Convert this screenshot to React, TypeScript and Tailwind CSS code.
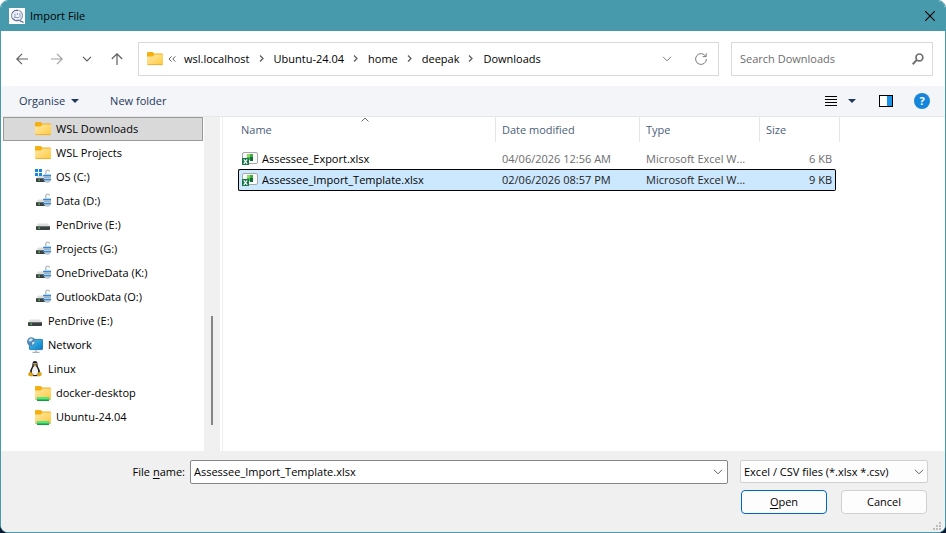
import type { ReactNode } from "react";

const FolderIcon = ({ shared = false }: { shared?: boolean }) => (
  <svg viewBox="0 0 16 16" className="h-4 w-4 shrink-0" aria-hidden="true">
    <defs>
      <linearGradient id="folder" x1="0" y1="0" x2="1" y2="1">
        <stop offset="0" stopColor="#ffe9ac" />
        <stop offset="1" stopColor="#ffc93c" />
      </linearGradient>
    </defs>
    <path d="M0 2.2Q0 1 1.2 1H5.6L7.2 2.6H14.8Q16 2.6 16 3.8V8H0Z" fill="#f5b010" />
    <path d="M0 5.6H5.6L7.6 3.6H15Q16 3.6 16 4.6V13Q16 14 15 14H1Q0 14 0 13Z" fill="url(#folder)" />
    <path d="M0.6 13.6H15.4" stroke="#e3a21a" strokeWidth="0.7" />
    {shared && (
      <>
        <path d="M0 14.5H16" stroke="#c4c8cc" />
        <rect x="2" y="12" width="12" height="4" rx="0.6" fill="#169c3c" />
        <rect x="2" y="12" width="12" height="2.4" rx="0.6" fill="#55e87c" />
      </>
    )}
  </svg>
);

const DriveIcon = ({ locked = false, system = false }: { locked?: boolean; system?: boolean }) => (
  <svg viewBox="0 0 16 16" className="h-4 w-4 shrink-0" aria-hidden="true">
    <path d="M3.2 6.5H12.8L15 9.5H1Z" fill="#dcdee0" />
    <rect x="1" y="9" width={locked ? 10 : 14} height="4" rx="0.7" fill="#3b3f42" />
    <rect x="1" y="9" width={locked ? 10 : 14} height="1" fill="#6a6e71" />
    <rect x="3.5" y="10.5" width="1.4" height="1.4" fill="#3fe04c" />
    {locked && (
      <>
        <path d="M10.8 5V3.2Q11 1.1 12.8 1.1Q14.4 1.1 14.4 2.6" fill="none" stroke="#b3bac0" strokeWidth="1.4" />
        <path d="M9 5H16V11Q15.2 14 12.5 14Q9.8 14 9 11Z" fill="#c3cbd3" />
        <path d="M8 6H16V7.2H8ZM8 10H16V11.2H8Z" fill="#2590ec" />
        <path d="M9 8H16V9H9Z" fill="#a5afb8" />
      </>
    )}
    {system && (
      <path d="M0 0H3V3H0ZM4 0H7V3H4ZM0 4H3V7H0ZM4 4H7V7H4Z" fill="#1388dc" />
    )}
  </svg>
);

const NetworkIcon = () => (
  <svg viewBox="0 0 16 16" className="h-4 w-4 shrink-0" aria-hidden="true">
    <defs>
      <linearGradient id="screen" x1="0" y1="0" x2="1" y2="1">
        <stop offset="0" stopColor="#3ccbf0" />
        <stop offset="1" stopColor="#0f78c4" />
      </linearGradient>
    </defs>
    <path d="M9 13V15M5.5 15.3H12.5" stroke="#a6b0b8" strokeWidth="1.2" />
    <rect x="2.4" y="2.4" width="13.2" height="10.2" rx="0.8" fill="url(#screen)" stroke="#1469a8" strokeWidth="0.8" />
    <circle cx="4.3" cy="4.6" r="4.3" fill="#4f88b4" />
    <path d="M1.4 2.8L4 1.2L6 2L4.8 4L2.6 4.8ZM5.2 5L7.6 4.4L7.4 6.6L5 8Z" fill="#c9e2f0" />
  </svg>
);

const LinuxIcon = () => (
  <svg viewBox="0 0 16 16" className="h-4 w-4 shrink-0" aria-hidden="true">
    <path d="M8 0Q5.3 0 5.4 3.4Q5.5 5.3 4 7.5Q2.4 10 3 12.5Q5 15.3 8 15.3Q11 15.3 13 12.5Q13.6 10 12 7.5Q10.5 5.3 10.6 3.4Q10.7 0 8 0Z" fill="#222" />
    <path d="M8 4.8Q6.4 5 5.4 8Q4 11.8 6 13.6Q8 14.6 10 13.6Q12 11.8 10.6 8Q9.6 5 8 4.8Z" fill="#f2f2f2" />
    <circle cx="7" cy="2.8" r="0.7" fill="#fff" />
    <circle cx="9" cy="2.8" r="0.7" fill="#fff" />
    <path d="M6.4 4.2L8 3.4L9.7 4.2L8 5.4Z" fill="#e8a512" />
    <path d="M1.4 12L3.4 10.6L6.4 13.6Q6.6 15.6 4.8 15.6L1.4 14.8ZM14.6 12L12.6 10.6L9.8 13.4Q9.6 15.6 11.4 15.6L14.6 14.4Z" fill="#d9a21b" />
  </svg>
);

const ExcelIcon = () => (
  <svg viewBox="0 0 16 16" className="h-4 w-4 shrink-0" aria-hidden="true">
    <rect x="0.5" y="1.5" width="15" height="11" rx="1.5" fill="#fafafa" stroke="#a8a8a8" />
    <path d="M5 3H8V6H5Z" fill="#8fd96a" />
    <path d="M8 3H11V6H8Z" fill="#3fae3c" />
    <path d="M5 6H8V9H5Z" fill="#4cbf43" />
    <path d="M8 6H11V10H8Z" fill="#146b3c" />
    <rect x="0" y="7" width="7" height="7" fill="#17754a" />
    <path d="M1.8 8.3L5.2 12.8M5.2 8.3L1.8 12.8" stroke="#fff" strokeWidth="1.2" />
  </svg>
);

const ChevronDown = ({ className }: { className: string }) => (
  <svg viewBox="0 0 10 6" className={className} fill="none" stroke="currentColor" aria-hidden="true">
    <path d="M1 0.8L5 4.8L9 0.8" />
  </svg>
);

const CaretDown = () => (
  <svg viewBox="0 0 8 4" className="h-1 w-2" fill="#1e395b" aria-hidden="true">
    <path d="M0 0H8L4 4Z" />
  </svg>
);

type TreeItem = { label: string; icon: ReactNode; nested?: boolean; selected?: boolean };

const tree: TreeItem[] = [
  { label: "WSL Downloads", icon: <FolderIcon />, nested: true, selected: true },
  { label: "WSL Projects", icon: <FolderIcon />, nested: true },
  { label: "OS (C:)", icon: <DriveIcon locked system />, nested: true },
  { label: "Data (D:)", icon: <DriveIcon locked />, nested: true },
  { label: "PenDrive (E:)", icon: <DriveIcon />, nested: true },
  { label: "Projects (G:)", icon: <DriveIcon locked />, nested: true },
  { label: "OneDriveData (K:)", icon: <DriveIcon locked />, nested: true },
  { label: "OutlookData (O:)", icon: <DriveIcon locked />, nested: true },
  { label: "PenDrive (E:)", icon: <DriveIcon /> },
  { label: "Network", icon: <NetworkIcon /> },
  { label: "Linux", icon: <LinuxIcon /> },
  { label: "docker-desktop", icon: <FolderIcon shared />, nested: true },
  { label: "Ubuntu-24.04", icon: <FolderIcon shared />, nested: true },
];

const files = [
  { name: "Assessee_Export.xlsx", modified: "04/06/2026 12:56 AM", size: "6 KB", selected: false },
  { name: "Assessee_Import_Template.xlsx", modified: "02/06/2026 08:57 PM", size: "9 KB", selected: true },
];

const crumbs = ["wsl.localhost", "Ubuntu-24.04", "home", "deepak", "Downloads"];

const TitleBar = () => (
  <header className="flex h-[30px] items-center bg-[#469aac] pr-2.5 pl-2">
    <svg viewBox="0 0 16 16" className="h-4 w-4" aria-hidden="true">
      <rect width="16" height="16" fill="#fff" />
      <circle cx="8" cy="7.5" r="5.5" fill="#eef1f8" stroke="#8c98b8" strokeWidth="1.2" />
      <path d="M3 5Q5 1.6 9 2.4M3.4 10.4Q6 13.4 10 12.2" fill="none" stroke="#5a6a98" />
      <path d="M6 5.5V9M8.4 5V7M11 5V9.5M5 9.5H10" stroke="#8494b8" strokeWidth="0.9" />
      <path d="M10.5 12.5L14.5 14.5" stroke="#44568c" strokeWidth="1.2" />
    </svg>
    <h1 className="ml-[5px] flex-1">Import File</h1>
    <button aria-label="Close">
      <svg viewBox="0 0 10 10" className="h-2.5 w-2.5" stroke="#000" strokeWidth="1.1" aria-hidden="true">
        <path d="M0 0L10 10M10 0L0 10" />
      </svg>
    </button>
  </header>
);

const NavBar = () => (
  <div className="flex h-[55px] items-center bg-white pr-3 pl-1.5 text-[#5f5f5f]">
    <button aria-label="Back" className="mr-[5px] flex h-8 w-[30px] items-center justify-center">
      <svg viewBox="0 0 12 12" className="h-3 w-3" fill="none" stroke="currentColor" strokeWidth="1.2">
        <path d="M12 6H0.8M6 0.8L0.8 6L6 11.2" />
      </svg>
    </button>
    <button aria-label="Forward" className="flex h-8 w-[30px] items-center justify-center text-[#a0a0a0]">
      <svg viewBox="0 0 12 12" className="h-3 w-3" fill="none" stroke="currentColor" strokeWidth="1.2">
        <path d="M0 6H11.2M6 0.8L11.2 6L6 11.2" />
      </svg>
    </button>
    <button aria-label="Recent locations" className="flex h-8 w-[30px] items-center justify-center">
      <ChevronDown className="h-1.5 w-2.5 stroke-[1.2]" />
    </button>
    <button aria-label="Up" className="mr-1.5 flex h-8 w-[30px] items-center justify-center">
      <svg viewBox="0 0 12 12" className="h-3 w-3" fill="none" stroke="currentColor" strokeWidth="1.2">
        <path d="M6 12V0.8M0.8 6L6 0.8L11.2 6" />
      </svg>
    </button>

    <div className="flex h-[34px] min-w-0 flex-1 items-center border border-[#d9d9d9] pr-[11px] pl-2">
      <FolderIcon />
      <svg viewBox="0 0 8 6" className="mr-2 ml-[5px] h-1.5 w-2" fill="none" stroke="currentColor" aria-hidden="true">
        <path d="M3.5 0.4L1 3L3.5 5.6M7.3 0.4L4.8 3L7.3 5.6" />
      </svg>
      <nav aria-label="Path" className="flex flex-1 items-center text-black">
        {crumbs.map((crumb, i) => (
          <span key={crumb} className="flex items-center">
            {i > 0 && (
              <svg viewBox="0 0 5 7" className="mr-2.5 ml-[9px] h-[7px] w-[5px]" fill="none" stroke="#5f5f5f" strokeWidth="1.3" aria-hidden="true">
                <path d="M1 0.5L4 3.5L1 6.5" />
              </svg>
            )}
            <button>{crumb}</button>
          </span>
        ))}
      </nav>
      <button aria-label="Previous locations" className="mr-[23px] text-[#7a7a7a]">
        <ChevronDown className="h-1.5 w-2.5" />
      </button>
      <button aria-label="Refresh" className="text-[#7a7a7a]">
        <svg viewBox="0 0 12 12" className="h-3 w-3" fill="none" stroke="currentColor">
          <path d="M10.6 3.2A5.4 5.4 0 1 0 11.4 6M11.2 0.3V3.6H7.8" />
        </svg>
      </button>
    </div>

    <div className="ml-3 flex h-[34px] w-[202px] items-center border border-[#d9d9d9] pr-2 pl-2">
      <input
        type="search"
        aria-label="Search Downloads"
        placeholder="Search Downloads"
        className="min-w-0 flex-1 outline-none placeholder:text-[#6d6d6d]"
      />
      <svg viewBox="0 0 12 12" className="h-3 w-3" fill="none" stroke="#707070" aria-hidden="true">
        <circle cx="7.4" cy="4.4" r="3.4" strokeWidth="1.7" />
        <path d="M4.8 7L0.6 11.2" strokeWidth="2" />
      </svg>
    </div>
  </div>
);

const Toolbar = () => (
  <div className="flex h-[31px] items-center border-b border-[#e5e7ea] bg-[#f4f5f8] pr-[15px] pl-[18px] text-[#1e395b]">
    <button className="flex items-center gap-1.5">
      Organise <CaretDown />
    </button>
    <button className="ml-[31px]">New folder</button>
    <div className="ml-auto flex items-center">
      <button aria-label="Change your view">
        <svg viewBox="0 0 12 12" className="h-3 w-3" stroke="#000" aria-hidden="true">
          <path d="M0 1.5H12M0 4.5H12M0 7.5H12M0 10.5H12" />
        </svg>
      </button>
      <button aria-label="More options" className="ml-[11px]">
        <CaretDown />
      </button>
      <button aria-label="Show the preview pane" className="ml-[23px]">
        <svg viewBox="0 0 14 12" className="h-3 w-3.5" aria-hidden="true">
          <rect x="0.5" y="0.5" width="13" height="11" fill="#fff" stroke="#000" />
          <rect x="8" y="1" width="5" height="10" fill="#1b93e6" />
        </svg>
      </button>
      <button
        aria-label="Get help"
        className="ml-[21px] h-4 w-4 rounded-full bg-[#1585dc] text-center leading-4 font-bold text-white"
      >
        ?
      </button>
    </div>
  </div>
);

const Sidebar = () => (
  <nav aria-label="Folders" className="flex w-[219px] shrink-0">
    <ul className="w-[203px] pr-px pl-0.5">
      {tree.map((item, i) => (
        <li key={i}>
          <button
            className={`flex h-6 w-full items-center gap-[5px] border text-left ${
              item.nested ? "pl-[31px]" : "pl-[23px]"
            } ${item.selected ? "border-[#999] bg-[#d9d9d9]" : "border-transparent"}`}
          >
            {item.icon}
            {item.label}
          </button>
        </li>
      ))}
    </ul>
    <div className="flex w-4 flex-col items-center justify-end bg-[#f0f0f0] pb-[26px]">
      <div className="h-[109px] w-0.5 bg-[#858585]" />
    </div>
  </nav>
);

const FileList = () => (
  <div className="ml-0.5 min-w-0 flex-1 border-l border-[#f0f0f0] pl-[15px]">
    <table className="w-[602px] table-fixed border-separate border-spacing-0">
      <colgroup>
        <col className="w-[258px]" />
        <col className="w-36" />
        <col className="w-[120px]" />
        <col className="w-[76px]" />
        <col className="w-1" />
      </colgroup>
      <thead>
        <tr className="h-[25px] text-left text-[#4c607a] [&>th]:border-r [&>th]:border-[#e5e5e5] [&>th]:font-normal">
          <th className="relative pl-[3px]">
            Name
            <svg viewBox="0 0 8 5" className="absolute top-0 left-[123px] h-[5px] w-2" fill="none" stroke="#6a6a6a" aria-hidden="true">
              <path d="M0.5 4.5L4 1L7.5 4.5" />
            </svg>
          </th>
          <th className="pl-1.5">Date modified</th>
          <th className="pl-1.5">Type</th>
          <th className="pl-1.5" colSpan={2}>
            Size
          </th>
        </tr>
      </thead>
      <tbody>
        <tr className="h-1.5">
          <td colSpan={5} />
        </tr>
        {files.map((file) => (
          <tr
            key={file.name}
            aria-selected={file.selected}
            className={
              file.selected
                ? "h-[22px] text-[#222] [&>td]:border-y [&>td]:border-black [&>td]:bg-[#cce8ff]"
                : "h-[21px] text-[#6d6d6d]"
            }
          >
            <td className={file.selected ? "rounded-l-xs border-l pl-[3px] text-black" : "pl-1 text-black"}>
              <span className="flex items-center gap-1">
                <ExcelIcon />
                {file.name}
              </span>
            </td>
            <td className="pl-1.5">{file.modified}</td>
            <td className="pl-1.5">Microsoft Excel W...</td>
            <td className={file.selected ? "rounded-r-xs border-r pr-[3px] text-right" : "pr-1 text-right"}>
              {file.size}
            </td>
          </tr>
        ))}
      </tbody>
    </table>
  </div>
);

const Footer = () => (
  <footer className="relative bg-[#f0f0f0] pt-[9px] pr-[17px] pb-[18px]">
    <div className="flex items-start">
      <label htmlFor="file-name" className="w-[189px] pr-[5px] text-right leading-6">
        File <u className="underline-offset-2">n</u>ame:
      </label>
      <div className="flex h-6 min-w-0 flex-1 items-center rounded-xs border border-[#868686] bg-white pr-1 pl-[3px]">
        <input id="file-name" type="text" defaultValue="Assessee_Import_Template.xlsx" className="min-w-0 flex-1 outline-none" />
        <button aria-label="Recent file names" className="text-[#5f5f5f]">
          <ChevronDown className="h-1.5 w-2.5" />
        </button>
      </div>
      <div className="relative ml-3">
        <select
          aria-label="File type"
          className="h-[23px] w-[188px] appearance-none rounded-xs border border-[#d0d0d0] bg-[#fdfdfd] pr-5 pl-[3px]"
        >
          <option>Excel / CSV files (*.xlsx *.csv)</option>
        </select>
        <ChevronDown className="pointer-events-none absolute top-[9px] right-1 h-1.5 w-2.5 text-[#5f5f5f]" />
      </div>
    </div>
    <div className="mt-1.5 flex justify-end gap-3.5 pr-px">
      <button className="h-6 w-[86px] rounded-sm border border-[#0067c0] bg-[#fdfdfd]">
        <u className="underline-offset-2">O</u>pen
      </button>
      <button className="h-6 w-[86px] rounded-sm border border-[#d0d0d0] bg-[#fdfdfd]">Cancel</button>
    </div>
    <svg viewBox="0 0 8 8" className="absolute right-1 bottom-0.5 h-2 w-2" fill="#bdbdbd" aria-hidden="true">
      <path d="M6 0H8V2H6ZM3 3H5V5H3ZM6 3H8V5H6ZM0 6H2V8H0ZM3 6H5V8H3ZM6 6H8V8H6Z" />
    </svg>
  </footer>
);

const App = () => {
  return (
    <div className="min-h-screen bg-linear-to-b from-white from-50% to-[#0c1a30] to-50% font-['Open_Sans','Noto_Sans',sans-serif] text-[11px] leading-4 text-black">
      <div
        role="dialog"
        aria-label="Import File"
        className="flex min-h-screen flex-col overflow-hidden rounded-lg border border-[#469aac] bg-white"
      >
        <TitleBar />
        <NavBar />
        <Toolbar />
        <main className="flex flex-1">
          <Sidebar />
          <FileList />
        </main>
        <Footer />
      </div>
    </div>
  );
};

export default App;
